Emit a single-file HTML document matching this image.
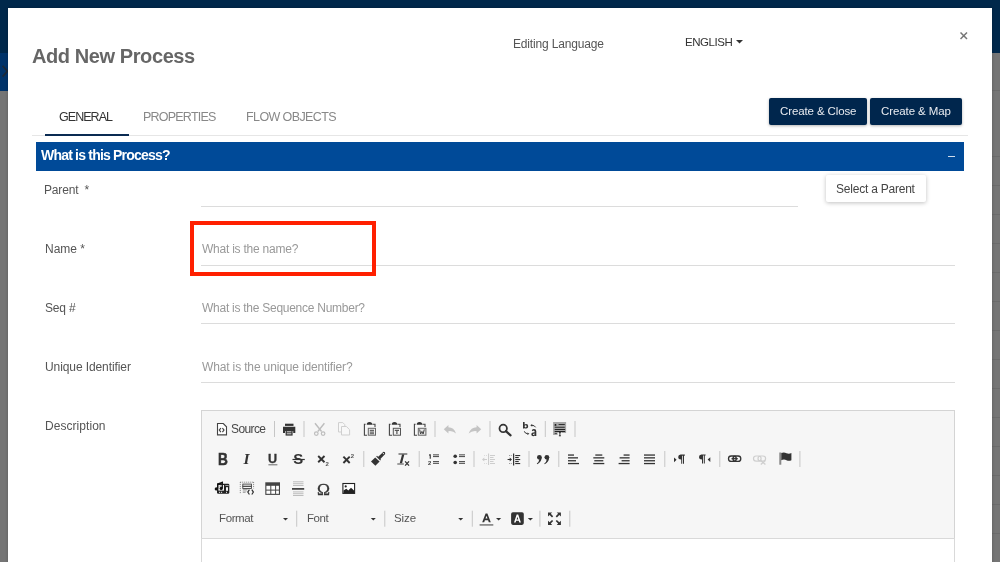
<!DOCTYPE html>
<html><head><meta charset="utf-8">
<style>
*{box-sizing:border-box;margin:0;padding:0}
html,body{width:1000px;height:562px;overflow:hidden;background:#757575;font-family:"Liberation Sans",sans-serif}
.abs{position:absolute}
.t{will-change:transform;position:absolute;white-space:nowrap;line-height:1}
.ul{position:absolute;height:1px;background:#dcdcdc}
.btn{position:absolute;top:98px;height:27px;background:#00264d;border-radius:2px;box-shadow:0 1px 3px rgba(0,0,0,.3)}
.sep{position:absolute;width:1px;background:#c9c9c9}
svg.ic{position:absolute;overflow:visible}
</style></head><body>
<div class="abs" style="left:0;top:0;width:1000px;height:53px;background:#00284b"></div>
<div class="abs" style="left:0;top:53px;width:8px;height:38px;background:#00336a"></div>
<svg class="abs" style="left:0;top:60px" width="10" height="20"><path d="M2.6 5.8 L7.4 11.2 L2.6 16.6" stroke="#1c2836" stroke-width="1.7" fill="none"/></svg>
<div class="abs" style="left:992px;top:90px;width:8px;height:1px;background:#6b6b6b"></div>
<div class="abs" style="left:990px;top:156px;width:10px;height:1px;background:#6b6b6b"></div>
<div class="abs" style="left:990px;top:185px;width:10px;height:1px;background:#6b6b6b"></div>
<div class="abs" style="left:990px;top:214px;width:10px;height:1px;background:#6b6b6b"></div>
<div class="abs" style="left:990px;top:243px;width:10px;height:1px;background:#6b6b6b"></div>
<div class="abs" style="left:990px;top:272px;width:10px;height:1px;background:#6b6b6b"></div>
<div class="abs" style="left:990px;top:301px;width:10px;height:1px;background:#6b6b6b"></div>
<div class="abs" style="left:990px;top:330px;width:10px;height:1px;background:#6b6b6b"></div>
<div class="abs" style="left:990px;top:359px;width:10px;height:1px;background:#6b6b6b"></div>
<div class="abs" style="left:990px;top:388px;width:10px;height:1px;background:#6b6b6b"></div>
<div class="abs" style="left:990px;top:417px;width:10px;height:1px;background:#6b6b6b"></div>
<div class="abs" style="left:990px;top:446px;width:10px;height:1px;background:#6b6b6b"></div>
<div class="abs" style="left:990px;top:475px;width:10px;height:1px;background:#6b6b6b"></div>
<div class="abs" style="left:990px;top:504px;width:10px;height:1px;background:#6b6b6b"></div>
<div class="abs" style="left:990px;top:533px;width:10px;height:1px;background:#6b6b6b"></div>

<div class="abs" style="left:8px;top:8px;width:984px;height:600px;background:#fff;box-shadow:0 0 3px rgba(0,0,0,.22)"></div>

<svg class="abs" style="left:736px;top:40px" width="8" height="4"><path d="M0 0 L7 0 L3.5 3.5Z" fill="#333"/></svg>
<svg class="abs" style="left:960px;top:32px" width="8" height="8"><path d="M0.5 0.5 L7 7 M7 0.5 L0.5 7" stroke="#777" stroke-width="1.5"/></svg>

<div class="abs" style="left:32px;top:135px;width:936px;height:1px;background:#e6e6e6"></div>
<div class="abs" style="left:45px;top:134px;width:84px;height:2px;background:#0a2b52"></div>

<div class="btn" style="left:769px;width:98px"></div>
<div class="btn" style="left:870px;width:92px"></div>

<div class="abs" style="left:36px;top:142px;width:928px;height:29px;background:#004a98"></div>
<div class="abs" style="left:948px;top:155.5px;width:7px;height:1.2px;background:#cfdcec"></div>

<div class="ul" style="left:201px;top:206px;width:597px"></div>
<div class="abs" style="left:826px;top:175px;width:100px;height:27px;background:#fff;border-radius:2px;box-shadow:0 1px 4px rgba(0,0,0,.25)"></div>
<div class="ul" style="left:201px;top:265px;width:754px"></div>
<div class="ul" style="left:201px;top:323px;width:754px"></div>
<div class="ul" style="left:201px;top:382px;width:754px"></div>

<div class="abs" style="left:190px;top:221px;width:186px;height:55px;border:4px solid #ff2000"></div>

<div class="abs" style="left:201px;top:410px;width:754px;height:170px;border:1px solid #d4d4d4;background:#f6f6f6"></div>
<div class="abs" style="left:201px;top:538px;width:754px;height:40px;border:1px solid #d9d9d9;background:#fff"></div>

<div class="t" id="title" style="left:31.80px;top:46.07px;font-size:20px;font-weight:bold;color:#666;letter-spacing:-0.412px">Add New Process</div>
<div class="t" id="edlang" style="left:513.00px;top:37.84px;font-size:12px;font-weight:normal;color:#555;letter-spacing:-0.167px">Editing Language</div>
<div class="t" id="english" style="left:684.50px;top:37.26px;font-size:11.5px;font-weight:normal;color:#333;letter-spacing:-0.435px">ENGLISH</div>
<div class="t" id="tab1" style="left:58.80px;top:111.42px;font-size:12.5px;font-weight:normal;color:#333;letter-spacing:-0.965px">GENERAL</div>
<div class="t" id="tab2" style="left:143.40px;top:111.42px;font-size:12.5px;font-weight:normal;color:#888;letter-spacing:-0.778px">PROPERTIES</div>
<div class="t" id="tab3" style="left:246.40px;top:111.42px;font-size:12.5px;font-weight:normal;color:#888;letter-spacing:-0.597px">FLOW OBJECTS</div>
<div class="t" id="btn1" style="left:779.50px;top:106.26px;font-size:11.5px;font-weight:normal;color:#e8ebf0;letter-spacing:-0.115px">Create &amp; Close</div>
<div class="t" id="btn2" style="left:881.00px;top:106.26px;font-size:11.5px;font-weight:normal;color:#e8ebf0;letter-spacing:-0.091px">Create &amp; Map</div>
<div class="t" id="sect" style="left:41.00px;top:148.15px;font-size:14px;font-weight:bold;color:#fff;letter-spacing:-0.800px">What is this Process?</div>
<div class="t" id="parent" style="left:44.40px;top:183.84px;font-size:12px;font-weight:normal;color:#555;letter-spacing:-0.175px">Parent&nbsp; *</div>
<div class="t" id="selpar" style="left:836.10px;top:182.84px;font-size:12px;font-weight:normal;color:#444;letter-spacing:-0.222px">Select a Parent</div>
<div class="t" id="name" style="left:45.20px;top:242.84px;font-size:12px;font-weight:normal;color:#555;letter-spacing:-0.040px">Name *</div>
<div class="t" id="nameph" style="left:201.70px;top:242.84px;font-size:12px;font-weight:normal;color:#999;letter-spacing:-0.232px">What is the name?</div>
<div class="t" id="seq" style="left:44.50px;top:301.84px;font-size:12px;font-weight:normal;color:#555;letter-spacing:-0.175px">Seq #</div>
<div class="t" id="seqph" style="left:201.70px;top:301.84px;font-size:12px;font-weight:normal;color:#999;letter-spacing:-0.261px">What is the Sequence Number?</div>
<div class="t" id="uniq" style="left:44.50px;top:360.84px;font-size:12px;font-weight:normal;color:#555;letter-spacing:-0.094px">Unique Identifier</div>
<div class="t" id="uniqph" style="left:201.70px;top:360.84px;font-size:12px;font-weight:normal;color:#999;letter-spacing:-0.145px">What is the unique identifier?</div>
<div class="t" id="desc" style="left:44.50px;top:419.84px;font-size:12px;font-weight:normal;color:#555;letter-spacing:0.050px">Description</div>
<div class="t" id="src" style="left:231.00px;top:422.84px;font-size:12px;font-weight:normal;color:#484848;letter-spacing:-0.600px">Source</div>
<div class="t" id="fmt" style="left:218.70px;top:513.26px;font-size:11.5px;font-weight:normal;color:#555;letter-spacing:-0.380px">Format</div>
<div class="t" id="fnt" style="left:307.10px;top:513.26px;font-size:11.5px;font-weight:normal;color:#555;letter-spacing:-0.433px">Font</div>
<div class="t" id="siz" style="left:394.00px;top:513.26px;font-size:11.5px;font-weight:normal;color:#555;letter-spacing:-0.066px">Size</div>
<svg class="abs" style="left:0;top:0" width="1000" height="562" viewBox="0 0 1000 562">
<g fill="#c6c6c6">
<!-- separators row1 -->
<rect x="274" y="421" width="1" height="16"/>
<rect x="303.5" y="421" width="1" height="16"/>
<rect x="434.5" y="421" width="1" height="16"/>
<rect x="489.5" y="421" width="1" height="16"/>
<rect x="544.8" y="421" width="1" height="16"/>
<rect x="574.5" y="421" width="1" height="16"/>
<!-- row2 -->
<rect x="363.3" y="451" width="1" height="16"/>
<rect x="418.7" y="451" width="1" height="16"/>
<rect x="473.5" y="451" width="1" height="16"/>
<rect x="528.5" y="451" width="1" height="16"/>
<rect x="558.3" y="451" width="1" height="16"/>
<rect x="664.3" y="451" width="1" height="16"/>
<rect x="719.3" y="451" width="1" height="16"/>
<rect x="799.4" y="451" width="1" height="16"/>
<!-- row4 -->
<rect x="296.2" y="510.7" width="1" height="16"/>
<rect x="384.3" y="510.7" width="1" height="16"/>
<rect x="471.8" y="510.7" width="1" height="16"/>
<rect x="539.4" y="510.7" width="1" height="16"/>
<rect x="569.3" y="510.7" width="1" height="16"/>
</g>

<!-- ROW 1 -->
<!-- source -->
<g stroke="#444" fill="none" stroke-width="1.1">
<path d="M217.5 423.5H223.3L226.5 426.8V434.9H217.5Z" fill="#fff"/>
<path d="M220.9 428L219.3 430.1L220.9 432.2M222.4 428L224 430.1L222.4 432.2" stroke-width="1.2"/>
</g>
<!-- print -->
<g fill="#333">
<rect x="285" y="423.7" width="8.5" height="2.2"/>
<path d="M283 426.8H295.3V433H293.2V431H285V433H283Z"/>
<rect x="285.6" y="430.2" width="7" height="5.4"/>
<rect x="286.8" y="431.3" width="4.6" height="1" fill="#ddd"/>
<rect x="286.8" y="433.3" width="4.6" height="1" fill="#ddd"/>
</g>
<!-- cut (disabled) -->
<g stroke="#bdbdbd" fill="none" stroke-width="1.4">
<path d="M315 423.2L321.6 431.5M324.4 423.2L317.8 431.5"/>
<circle cx="316.3" cy="433.6" r="1.8" stroke-width="1.2"/>
<circle cx="323.1" cy="433.6" r="1.8" stroke-width="1.2"/>
</g>
<!-- copy (disabled) -->
<g stroke="#cfcfcf" fill="#f8f8f8" stroke-width="1">
<path d="M338.5 422.6H342.8L344.8 424.6V432H338.5Z"/>
<path d="M341.5 426.5H346.4L349.6 429.7V435H341.5Z"/>
</g>
<!-- paste -->
<g>
<path d="M365.6 424.2H364.4V435.3H367" stroke="#444" stroke-width="1.1" fill="none"/>
<path d="M372.5 424.2H375V427" stroke="#444" stroke-width="1.1" fill="none"/>
<path d="M366.7 424.8Q366.7 422 369.5 422Q372.3 422 372.3 424.8Z" fill="#333"/>
<rect x="367.8" y="427.8" width="8.2" height="7.9" fill="#666"/>
<rect x="368.8" y="428.8" width="6.2" height="5.9" fill="#eee"/>
<g fill="#444"><rect x="369.8" y="429.8" width="4.2" height="1"/><rect x="369.8" y="431.6" width="4.2" height="1"/><rect x="369.8" y="433.3" width="4.2" height="0.9"/></g>
</g>
<!-- paste text -->
<g>
<path d="M390.6 424.2H389.4V435.3H392" stroke="#444" stroke-width="1.1" fill="none"/>
<path d="M397.5 424.2H400V427" stroke="#444" stroke-width="1.1" fill="none"/>
<path d="M391.7 424.8Q391.7 422 394.5 422Q397.3 422 397.3 424.8Z" fill="#333"/>
<rect x="392.8" y="427.8" width="8.2" height="7.9" fill="#555"/>
<rect x="393.8" y="428.8" width="6.2" height="5.9" fill="#f2f2f2"/>
<path d="M394.8 429.8H399V431H397.5V434H396.3V431H394.8Z" fill="#555"/>
</g>
<!-- paste from word -->
<g>
<path d="M415.6 424.2H414.4V435.3H417" stroke="#444" stroke-width="1.1" fill="none"/>
<path d="M422.5 424.2H425V427" stroke="#444" stroke-width="1.1" fill="none"/>
<path d="M416.7 424.8Q416.7 422 419.5 422Q422.3 422 422.3 424.8Z" fill="#333"/>
<rect x="417.8" y="427.8" width="8.6" height="7.9" fill="#666"/>
<rect x="418.8" y="428.8" width="6.6" height="5.9" fill="#e8e8e8"/>
<path d="M419.6 429.4L420.6 434L421.9 431.4L423.1 434L424.3 429.4" stroke="#444" stroke-width="1" fill="none"/>
</g>
<!-- undo (disabled) -->
<path d="M443.8 429.2L448.4 425V427.3Q454 427.3 456 433.6Q453.2 430.6 448.4 431.2V433.4Z" fill="#c4c4c4"/>
<!-- redo (disabled) -->
<path d="M481.2 429.2L476.6 425V427.3Q471 427.3 468.6 433.6Q471.8 430.6 476.6 431.2V433.4Z" fill="#c4c4c4"/>
<!-- find -->
<g stroke="#333" fill="none">
<circle cx="503.2" cy="428.4" r="3.7" stroke-width="1.8"/>
<path d="M505.9 431.2L510.6 435.3" stroke-width="2.2" stroke-linecap="round"/>
</g>
<!-- replace -->
<g fill="#333">
<path d="M523 422.1H524.6V424.6Q525.2 424 526.2 424Q528.2 424 528.2 426.3Q528.2 428.6 526.2 428.6Q525.1 428.6 524.5 427.9V428.5H523ZM524.6 426.3Q524.6 427.4 525.6 427.4Q526.6 427.4 526.6 426.3Q526.6 425.2 525.6 425.2Q524.6 425.2 524.6 426.3Z"/>
<path d="M531.8 430.4Q532.4 429.1 534 429.1Q536.3 429.1 536.3 431.2V436.1H534.8V435.4Q534.2 436.2 533.2 436.2Q531.3 436.2 531.3 434.3Q531.3 432.4 534.7 432.3Q534.7 430.6 533.8 430.6Q533.1 430.6 532.9 431.2ZM534.7 433.4Q532.9 433.5 532.9 434.2Q532.9 434.9 533.6 434.9Q534.7 434.9 534.7 433.4Z"/>
<path d="M535.6 427.3Q534.6 425.3 532 425.3" stroke="#333" stroke-width="1" fill="none"/>
<path d="M530.3 425.3L532.2 423.9V426.7Z"/>
<path d="M524.3 431.3Q525 433.6 527.6 433.7" stroke="#333" stroke-width="1" fill="none"/>
<path d="M529.4 433.8L527.4 435.1V432.4Z"/>
</g>
<!-- select all -->
<g>
<path d="M553.1 422.1H566.1V433H561.8V432.4H557.6V435.1H553.1Z" fill="#a6a6a6"/>
<circle cx="555.5" cy="424.9" r="0.95" fill="#111"/>
<g fill="#222"><rect x="558.6" y="424" width="6.2" height="0.9"/><rect x="554.7" y="426.8" width="10.1" height="0.9"/><rect x="554.7" y="429" width="10.4" height="1"/><rect x="554.7" y="431" width="10.4" height="1"/></g>
<rect x="554.7" y="433" width="2.2" height="0.8" fill="#333"/>
<path d="M559.9 432.6V435.8M558.9 432.6H560.9M558.9 435.8H560.9" stroke="#222" stroke-width="0.9"/>
</g>

<!-- ROW 2 -->
<g fill="#333" font-family="Liberation Sans">
<text x="0" y="0" font-weight="bold" font-size="16.3" transform="translate(218.1 464.5) scale(0.84 1)" stroke="#333" stroke-width="0.5">B</text>
<text x="243.6" y="464.4" font-family="Liberation Serif" font-weight="bold" font-style="italic" font-size="15.6">I</text>
<text x="268" y="463" font-weight="bold" font-size="12.6" stroke="#333" stroke-width="0.3">U</text>
</g>
<rect x="268.4" y="464.1" width="9" height="1.3" fill="#8a8a8a"/>
<text x="293.2" y="464.4" font-family="Liberation Sans" font-weight="bold" font-size="15" fill="#333">S</text>
<rect x="292.5" y="458.9" width="12.3" height="1.2" fill="#333"/>
<!-- subscript -->
<path d="M318.2 456L324.5 462.2M324.5 456L318.2 462.2" stroke="#333" stroke-width="1.9"/>
<text x="325.6" y="465.5" font-family="Liberation Sans" font-weight="bold" font-size="6" fill="#555">2</text>
<!-- superscript -->
<path d="M343.4 456.6L349.7 463M349.7 456.6L343.4 463" stroke="#333" stroke-width="1.9"/>
<text x="350.8" y="457.9" font-family="Liberation Sans" font-weight="bold" font-size="6" fill="#555">2</text>
<!-- copy formatting brush -->
<g fill="#333">
<path d="M371 461.6L375.2 457.4L379.6 461.6L375.4 465.8Z"/>
<path d="M376.2 456.6L377 455.8L381 459.8L380.2 460.6Z"/>
<path d="M377.7 457.2L383.2 451.9Q385.6 451.6 385.2 454L379.9 459.5Z"/>
<circle cx="383.4" cy="453.6" r="0.7" fill="#eee"/>
</g>
<!-- remove format -->
<g>
<rect x="398.5" y="453.2" width="8.8" height="1.6" fill="#777"/>
<path d="M402 454.6H404.3L402 463.4H399.7Z" fill="#333"/>
<rect x="397.3" y="463.2" width="6.5" height="1.6" fill="#888"/>
<path d="M405.1 461.4L409 465.6M409 461.4L405.1 465.6" stroke="#333" stroke-width="1.3"/>
</g>
<!-- numbered list -->
<g fill="#333">
<path d="M429.2 454.3H430.8V458.8H429.7V455.4L429 455.8Z"/>
<text x="428" y="465.3" font-family="Liberation Sans" font-weight="bold" font-size="5.8">2</text>
<g fill="#555"><rect x="433" y="454.3" width="6" height="1.1"/><rect x="433" y="456" width="6" height="1.1"/><rect x="433" y="461" width="6" height="1.1"/><rect x="433" y="462.8" width="6" height="1.1"/></g>
</g>
<!-- bulleted list -->
<g fill="#333">
<circle cx="455.2" cy="456.2" r="1.8"/><circle cx="455.2" cy="462.5" r="1.8"/>
<g fill="#555"><rect x="459" y="454.3" width="6" height="1.1"/><rect x="459" y="456" width="6" height="1.1"/><rect x="459" y="461" width="6" height="1.1"/><rect x="459" y="462.8" width="6" height="1.1"/></g>
</g>
<!-- outdent disabled -->
<g fill="#cdcdcd">
<rect x="488" y="453.5" width="1.1" height="11.5"/>
<rect x="490" y="455" width="5" height="1"/><rect x="490" y="457" width="3.5" height="1"/><rect x="490" y="459" width="5" height="1"/><rect x="490" y="461" width="3.5" height="1"/><rect x="490" y="463" width="5" height="1"/>
<path d="M482 459.5L484.3 457.6V459H487V460H484.3V461.4Z"/>
<rect x="484" y="455" width="0.8" height="0.8"/><rect x="486" y="455" width="0.8" height="0.8"/><rect x="484" y="463" width="0.8" height="0.8"/><rect x="486" y="463" width="0.8" height="0.8"/>
</g>
<!-- indent -->
<g fill="#333">
<rect x="513" y="453.5" width="1.2" height="12"/>
<rect x="515.2" y="455" width="5" height="1.1"/><rect x="515.2" y="457" width="3.5" height="1.1"/><rect x="515.2" y="459" width="5" height="1.1"/><rect x="515.2" y="461" width="3.5" height="1.1"/><rect x="515.2" y="463" width="5" height="1.1"/>
<path d="M512 459.5L509.7 457.6V459H507.6V460H509.7V461.4Z"/>
<g fill="#888"><rect x="509" y="455" width="0.9" height="0.9"/><rect x="510.8" y="455" width="0.9" height="0.9"/><rect x="509" y="463" width="0.9" height="0.9"/><rect x="510.8" y="463" width="0.9" height="0.9"/></g>
</g>
<!-- blockquote -->
<g fill="#333">
<circle cx="539.4" cy="457.3" r="2.4"/><path d="M541.6 457.8Q541.4 462.2 537.2 464.2L536.8 463.6Q539 462.2 539.2 459.4Z"/>
<circle cx="546.9" cy="457.3" r="2.4"/><path d="M549.1 457.8Q548.9 462.2 544.7 464.2L544.3 463.6Q546.5 462.2 546.7 459.4Z"/>
</g>
<!-- justify left/center/right/block -->
<g fill="#333">
<rect x="568" y="454.4" width="6" height="1.3"/><rect x="568" y="457.2" width="10" height="1.3"/><rect x="568" y="460.1" width="8" height="1.3"/><rect x="568" y="462.9" width="11" height="1.3"/>
<rect x="595.3" y="454.4" width="7" height="1.3"/><rect x="593.3" y="457.2" width="11" height="1.3"/><rect x="594.3" y="460.1" width="9" height="1.3"/><rect x="593.3" y="462.9" width="11" height="1.3"/>
<rect x="623.6" y="454.4" width="6" height="1.3"/><rect x="619.6" y="457.2" width="10" height="1.3"/><rect x="621.6" y="460.1" width="8" height="1.3"/><rect x="618.6" y="462.9" width="11" height="1.3"/>
<rect x="644" y="454.4" width="11" height="1.3"/><rect x="644" y="457.2" width="11" height="1.3"/><rect x="644" y="460.1" width="11" height="1.3"/><rect x="644" y="462.9" width="11" height="1.3"/>
</g>
<!-- bidi ltr -->
<g fill="#333">
<path d="M674 457.4L676.6 459.8L674 462.2Z"/>
<path d="M680.6 454.6H684.8V455.8H684V463.8H683V455.8H682.2V463.8H681.2V459.6Q678.2 459.6 678.2 457.1Q678.2 454.6 680.6 454.6Z"/>
</g>
<!-- bidi rtl -->
<g fill="#333">
<path d="M701.4 454.4H705.6V455.6H704.8V463.6H703.8V455.6H703V463.6H702V459.4Q699 459.4 699 456.9Q699 454.4 701.4 454.4Z"/>
<path d="M710.3 457.2L707.6 459.6L710.3 462Z"/>
</g>
<!-- link -->
<g fill="none" stroke="#333">
<rect x="728.5" y="456" width="7.8" height="5.4" rx="2.7" stroke-width="1.3"/>
<rect x="733" y="456" width="7.8" height="5.4" rx="2.7" stroke-width="1.3"/>
<path d="M731.5 458.7H737.8" stroke-width="1.3"/>
</g>
<!-- unlink disabled -->
<g fill="none" stroke="#cfcfcf" stroke-width="1.2">
<rect x="753.5" y="456" width="7.6" height="5.2" rx="2.6"/>
<rect x="758" y="456" width="7.6" height="5.2" rx="2.6"/>
<path d="M760.8 460.5L765.4 464.6M765.4 460.5L760.8 464.6" stroke-width="1.3"/>
</g>
<!-- anchor flag -->
<g>
<rect x="779.3" y="452.5" width="2" height="12.2" fill="#888"/>
<path d="M781.3 453Q784 452 786.5 453.2Q789 454.2 791.4 453V460.2Q789 461.4 786.5 460.2Q784 459 781.3 460.2Z" fill="#333"/>
</g>

<!-- ROW 3 -->
<!-- media -->
<g>
<rect x="217" y="483.8" width="12.3" height="9.9" rx="1.3" fill="#222"/>
<rect x="218.4" y="485" width="5.6" height="5.6" fill="#f4f4f4"/>
<circle cx="220.8" cy="486.2" r="1.3" fill="#bbb"/>
<g fill="#f4f4f4"><rect x="219" y="491.8" width="1.1" height="1"/><rect x="221" y="491.8" width="1.1" height="1"/><rect x="225.6" y="485" width="1" height="1"/><rect x="227.4" y="485" width="1" height="1"/><rect x="226" y="487.2" width="2" height="3.6"/><rect x="226" y="491.8" width="1" height="1"/></g>
<g fill="#111">
<path d="M217 483.6L222.9 481.6V483.2L218.2 484.9Z"/>
<rect x="217" y="483.6" width="1.2" height="5.2"/>
<rect x="221.7" y="481.8" width="1.2" height="6.6"/>
<circle cx="216.3" cy="488.9" r="1.6"/>
<circle cx="221.2" cy="488.4" r="1.6"/>
</g>
</g>
<!-- create div / iframe -->
<g>
<path d="M240.3 482.2V493.6M253.6 482.2V488.5M240.3 482.2H253.6" stroke="#666" stroke-width="0.9" stroke-dasharray="0.9 1.1" fill="none"/>
<rect x="242.8" y="484.1" width="8.6" height="2.2" fill="none" stroke="#444" stroke-width="0.9"/>
<rect x="242.8" y="486.3" width="8.6" height="2.2" fill="none" stroke="#444" stroke-width="0.9"/>
<path d="M242.8 489.6H247.6M242.8 491H246.6M242.8 492.4H245.6" stroke="#999" stroke-width="0.9"/>
<path d="M249.4 489.7L247.8 492.1L249.4 494.5M251.8 489.7L253.4 492.1L251.8 494.5" stroke="#333" stroke-width="1.2" fill="none"/>
</g>
<!-- table -->
<g>
<rect x="265.3" y="482.3" width="14.7" height="12.6" fill="#444"/>
<g fill="#fff"><rect x="266.4" y="485.8" width="3.9" height="3.8"/><rect x="271.3" y="485.8" width="3.8" height="3.8"/><rect x="276.1" y="485.8" width="2.8" height="3.8"/>
<rect x="266.4" y="490.6" width="3.9" height="3.2"/><rect x="271.3" y="490.6" width="3.8" height="3.2"/><rect x="276.1" y="490.6" width="2.8" height="3.2"/></g>
</g>
<!-- horizontal rule -->
<g fill="#bdbdbd">
<rect x="293" y="481.3" width="10.5" height="1"/><rect x="293" y="483.2" width="10.5" height="1"/><rect x="293" y="485" width="10.5" height="1"/>
<rect x="293" y="491.4" width="10.5" height="1"/><rect x="293" y="493.2" width="10.5" height="1"/><rect x="293" y="495" width="10.5" height="1"/>
</g>
<rect x="292" y="488.1" width="12.2" height="1.6" fill="#333"/>
<!-- omega -->
<text x="316.9" y="494.9" font-family="Liberation Serif" font-size="17.5" fill="#333" stroke="#333" stroke-width="0.35">Ω</text>
<!-- image -->
<g>
<rect x="342.9" y="483.5" width="11.7" height="9.9" fill="#fff" stroke="#222" stroke-width="1.1"/>
<circle cx="345.7" cy="486.4" r="1.1" fill="#222"/>
<path d="M343.5 493V490.6L346.3 488.8L348.3 490.4L351 487.7L354 490.4V493Z" fill="#222"/>
</g>

<!-- ROW 4 -->
<g fill="#333">
<path d="M283 518H288L285.5 520.4Z"/>
<path d="M370.8 518H375.8L373.3 520.4Z"/>
<path d="M458.2 518H463.2L460.7 520.4Z"/>
<path d="M496 518H501.2L498.6 520.4Z"/>
<path d="M527.8 518H533L530.4 520.4Z"/>
</g>
<!-- text color -->
<path d="M482.2 522.2L485.6 513.6H487.4L490.8 522.2H488.8L488.1 520.2H484.9L484.2 522.2ZM485.5 518.6H487.5L486.5 515.7Z" fill="#333"/>
<rect x="479.6" y="524" width="13.7" height="1.8" fill="#8c8c8c"/>
<!-- bg color -->
<rect x="511.1" y="512.2" width="12.7" height="12.7" rx="1.8" fill="#333"/>
<path d="M514 522.6L516.7 514.6H518.2L520.9 522.6H519.3L518.7 520.8H516.2L515.6 522.6ZM516.6 519.4H518.3L517.45 516.7Z" fill="#fff"/>
<!-- maximize -->
<g fill="#333">
<path d="M548 512.4H552.2L550.8 513.8L553.2 516.2L552 517.4L549.6 515L548 516.6Z"/>
<path d="M560.9 512.4H556.7L558.1 513.8L555.7 516.2L556.9 517.4L559.3 515L560.9 516.6Z"/>
<path d="M548 524.9H552.2L550.8 523.5L553.2 521.1L552 519.9L549.6 522.3L548 520.7Z"/>
<path d="M560.9 524.9H556.7L558.1 523.5L555.7 521.1L556.9 519.9L559.3 522.3L560.9 520.7Z"/>
</g>
</svg>

</body></html>
